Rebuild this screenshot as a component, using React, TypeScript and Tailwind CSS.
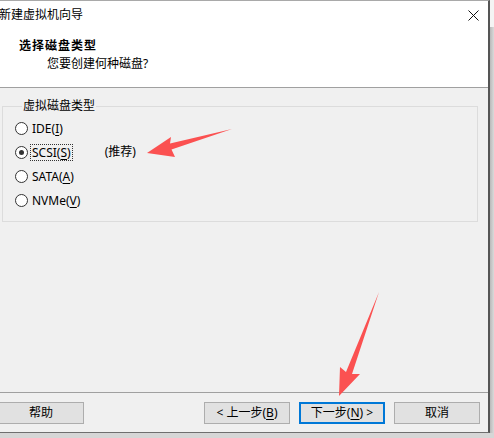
import React from "react";

const font = { fontFamily: '"Noto Sans", "Noto Sans CJK SC", sans-serif' };

function Radio({ checked }: { checked?: boolean }) {
  return (
    <span className="w-[13px] h-[13px] rounded-full border border-[#333333] bg-white flex items-center justify-center shrink-0">
      {checked && <span className="w-[5px] h-[5px] rounded-full bg-[#333333]" />}
    </span>
  );
}

function Option({
  pre,
  key1,
  focused,
  checked,
  extra,
}: {
  pre: string;
  key1: string;
  focused?: boolean;
  checked?: boolean;
  extra?: string;
}) {
  return (
    <div className="h-[24px] flex items-center">
      <Radio checked={checked} />
      <span
        className={
          "ml-[2px] px-[1px] leading-[15px] border " +
          (focused ? "border-dotted border-[#333333]" : "border-transparent")
        }
      >
        {pre}(<span className="underline underline-offset-2">{key1}</span>)
      </span>
      {extra && <span className="ml-[32px]">{extra}</span>}
    </div>
  );
}

function Btn({
  children,
  focused,
  className = "",
}: {
  children: React.ReactNode;
  focused?: boolean;
  className?: string;
}) {
  return (
    <div
      className={
        "w-[86px] h-[22px] flex items-center justify-center bg-[#e1e1e1] " +
        (focused ? "border-2 border-[#0078d7]" : "border border-[#adadad]") +
        " " +
        className
      }
    >
      {children}
    </div>
  );
}

export default function App() {
  return (
    <div
      className="w-[494px] h-[438px] overflow-hidden bg-[#d2d2d2] flex flex-col relative text-[12px] leading-[16px] text-black"
      style={font}
    >
      <div className="flex">
        {/* dialog window */}
        <div className="w-[490px] h-[433px] flex flex-col border-t border-t-[#a9a9a9] border-r-2 border-r-[#555555] border-b border-b-[#6f6f6f] shrink-0">
          {/* header */}
          <div className="h-[86px] bg-white flex flex-col border-b border-[#a0a0a0] box-content">
            <div className="h-[28px] flex items-center justify-between pr-[9px]">
              <span className="-ml-[1px]">新建虚拟机向导</span>
              <svg width="11" height="11" viewBox="0 0 11 11">
                <path d="M0.5 0.5 L10.5 10.5 M10.5 0.5 L0.5 10.5" stroke="#111" strokeWidth="1" />
              </svg>
            </div>
            <div className="mt-[9px] pl-[19px] font-bold tracking-[1px]">选择磁盘类型</div>
            <div className="mt-[2px] pl-[47px]">您要创建何种磁盘?</div>
          </div>

          {/* body */}
          <div className="h-[304px] bg-[#f0f0f0] pt-[10px] pl-[2px]">
            <fieldset className="w-[476px] border border-[#dcdcdc] m-0 pt-[2px] pb-[9px] pl-[12px] pr-0">
              <legend className="ml-[7px] px-[1px] leading-[16px]">虚拟磁盘类型</legend>
              <Option pre="IDE" key1="I" />
              <Option pre="SCSI" key1="S" focused checked extra="(推荐)" />
              <Option pre="SATA" key1="A" />
              <Option pre="NVMe" key1="V" />
            </fieldset>
          </div>

          <div className="h-[1px] bg-[#a0a0a0]" />

          {/* buttons */}
          <div className="h-[39px] bg-[#f0f0f0] pt-[9px] pr-[8px] flex justify-between">
            <Btn className="-ml-[2px]">帮助</Btn>
            <div className="flex gap-[9px]">
              <Btn>
                &lt; 上一步(<span className="underline underline-offset-2">B</span>)
              </Btn>
              <Btn focused>
                下一步(<span className="underline underline-offset-2">N</span>) &gt;
              </Btn>
              <Btn>取消</Btn>
            </div>
          </div>
        </div>

        {/* desktop strip behind the dialog */}
        <div className="flex-1 flex flex-col">
          <div className="h-[27px] bg-[#f4f4f4]" />
          <div className="flex-1 bg-gradient-to-r from-[#b9b9b9] to-[#dadada]" />
        </div>
      </div>
      <div className="flex-1 bg-[#d6d6d6]" />

      {/* annotation arrows */}
      <svg className="absolute left-0 top-0 pointer-events-none" width="494" height="438">
        <polygon
          points="147,153 171,137 170,143.5 232,129 171.5,149.5 175,157"
          fill="#fb5151"
        />
        <polygon
          points="339,396 340,367 346,372 379,292 352,374 360,374"
          fill="#fb5151"
        />
      </svg>
    </div>
  );
}
